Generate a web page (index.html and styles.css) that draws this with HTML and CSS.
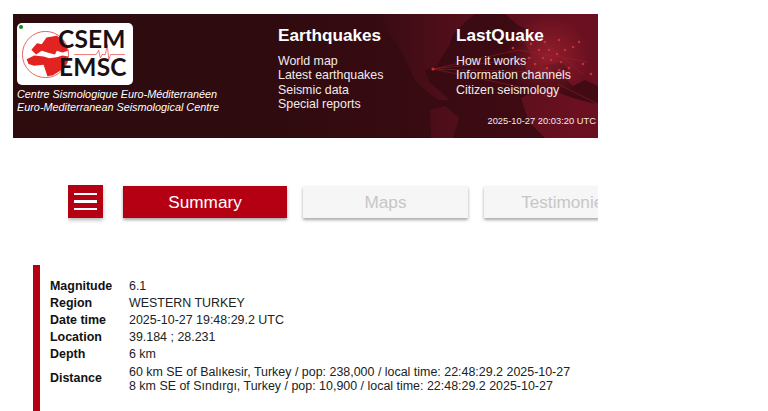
FILE: index.html
```html
<!DOCTYPE html>
<html lang="en">
<head>
<meta charset="utf-8">
<title>CSEM EMSC</title>
<link rel="stylesheet" href="styles.css">
</head>
<body>
<div class="page">
  <header class="header">
    <svg class="map" viewBox="0 0 585 124" preserveAspectRatio="none" aria-hidden="true">
      <defs>
        <linearGradient id="shade" x1="0" x2="1" y1="0" y2="0">
          <stop offset="0" stop-color="#2e0c0e"/>
          <stop offset="0.45" stop-color="#2f0b0f"/>
          <stop offset="0.75" stop-color="#3a0a12"/>
          <stop offset="1" stop-color="#430a14"/>
        </linearGradient>
        <linearGradient id="land" gradientUnits="userSpaceOnUse" x1="350" x2="560" y1="0" y2="0">
          <stop offset="0" stop-color="#340b11"/>
          <stop offset="0.4" stop-color="#4f0e1a"/>
          <stop offset="1" stop-color="#6a1020"/>
        </linearGradient>
        <radialGradient id="glow" gradientUnits="userSpaceOnUse" cx="535" cy="42" r="42">
          <stop offset="0" stop-color="#a02230" stop-opacity="0.75"/>
          <stop offset="1" stop-color="#a02230" stop-opacity="0"/>
        </radialGradient>
      </defs>
      <rect width="585" height="124" fill="url(#shade)"/>
      <path fill="url(#land)" d="M370 0 H462 L452 8 L440 20 L436 32 L428 44 L424 52 L412 56 L416 68 L428 78 L436 86 L426 86 L414 78 L402 66 L394 48 L384 30 L372 14 Z"/>
      <path fill="url(#land)" d="M417 96 L432 92 L446 104 L440 124 H418 Z"/>
      <path fill="url(#land)" d="M492 0 H585 V72 L572 66 L560 72 L548 60 L530 62 L516 66 L512 52 L518 40 L510 26 L524 18 L506 12 Z"/>
      <path fill="url(#land)" d="M508 84 L524 76 L544 78 L560 84 L574 88 L585 90 V124 H532 L516 108 Z"/>
      <path fill="#3a0a12" d="M530 52 L548 48 L556 56 L542 58 Z"/>
      <rect x="490" width="95" height="90" fill="url(#glow)"/>
      <g stroke="#a1232d" stroke-width="0.6" opacity="0.8" fill="none">
        <path d="M420 55 L520 44"/>
        <path d="M420 55 L505 36"/>
        <path d="M420 55 L530 58"/>
        <path d="M420 55 L512 74"/>
        <path d="M530 28 L570 60"/>
        <path d="M505 36 L575 48"/>
        <path d="M545 70 L585 90"/>
      </g>
      <g fill="#c23037">
        <circle cx="420" cy="55" r="1.6"/><circle cx="532" cy="28" r="1.3"/><circle cx="546" cy="26" r="1.3"/>
        <circle cx="518" cy="30" r="1.3"/><circle cx="526" cy="36" r="1.3"/><circle cx="536" cy="36" r="1.3"/>
        <circle cx="544" cy="40" r="1.3"/><circle cx="552" cy="36" r="1.3"/><circle cx="560" cy="33" r="1.3"/>
        <circle cx="516" cy="44" r="1.3"/><circle cx="530" cy="44" r="1.3"/><circle cx="538" cy="46" r="1.3"/>
        <circle cx="548" cy="48" r="1.3"/><circle cx="522" cy="50" r="1.3"/><circle cx="534" cy="54" r="1.3"/>
        <circle cx="546" cy="56" r="1.3"/><circle cx="526" cy="58" r="1.3"/><circle cx="556" cy="54" r="1.3"/>
        <circle cx="570" cy="50" r="1.3"/><circle cx="578" cy="60" r="1.3"/><circle cx="500" cy="34" r="1.3"/>
        <circle cx="566" cy="28" r="1.3"/><circle cx="510" cy="60" r="1.3"/>
      </g>
    </svg>
    <div class="brand">
      <div class="logo">
        <span class="status-dot"></span>
        <svg class="globe" viewBox="0 0 52 52" aria-hidden="true">
          <circle cx="26" cy="26" r="24.5" fill="#fff" stroke="#ea5a5a" stroke-width="1"/>
          <path fill="#e32222" d="M11 21 L17 14 L22 15 L27 8 L38 6 L45 11 L50 22 L44 24 L38 22 L36 26 L28 24 L22 22 L16 26 Z"/>
          <path fill="#e32222" d="M6 31 L14 27 L24 28 L30 30 L38 29 L44 27 L50 28 L49 35 L42 43 L34 48 L28 49 L26 43 L24 37 L14 38 L8 36 Z"/>
        </svg>
        <svg class="trace" viewBox="0 0 60 20" aria-hidden="true">
          <path d="M0 13 H26 L29 8 L31 17 L33 13 H37 L39 1 L41 19 L43 13 H60" fill="none" stroke="#e63a3a" stroke-width="0.8"/>
        </svg>
        <span class="logo-word logo-csem">CSEM</span>
        <span class="logo-word logo-emsc">EMSC</span>
      </div>
      <p class="tagline">Centre Sismologique Euro-Méditerranéen<br>Euro-Mediterranean Seismological Centre</p>
    </div>
    <nav class="menus">
      <div class="menu menu-eq">
        <h2 class="menu-title">Earthquakes</h2>
        <a class="menu-link">World map</a>
        <a class="menu-link">Latest earthquakes</a>
        <a class="menu-link">Seismic data</a>
        <a class="menu-link">Special reports</a>
      </div>
      <div class="menu">
        <h2 class="menu-title">LastQuake</h2>
        <a class="menu-link">How it works</a>
        <a class="menu-link">Information channels</a>
        <a class="menu-link">Citizen seismology</a>
      </div>
    </nav>
    <div class="clock">2025-10-27 20:03:20 UTC</div>
  </header>

  <div class="tabs">
    <button class="burger" aria-label="Menu"><span></span><span></span><span></span></button>
    <button class="tab tab-active">Summary</button>
    <button class="tab tab-wide">Maps</button>
    <button class="tab tab-wide">Testimonies</button>
  </div>

  <section class="summary">
    <table class="facts">
      <tr><th>Magnitude</th><td>6.1</td></tr>
      <tr><th>Region</th><td>WESTERN TURKEY</td></tr>
      <tr><th>Date time</th><td>2025-10-27 19:48:29.2 UTC</td></tr>
      <tr><th>Location</th><td>39.184 ; 28.231</td></tr>
      <tr><th>Depth</th><td>6 km</td></tr>
      <tr><th>Distance</th><td class="distance">60 km SE of Balıkesir, Turkey / pop: 238,000 / local time: 22:48:29.2 2025-10-27<br>8 km SE of Sındırgı, Turkey / pop: 10,900 / local time: 22:48:29.2 2025-10-27</td></tr>
    </table>
  </section>
</div>
</body>
</html>
```
FILE: styles.css
```css
html, body { margin: 0; padding: 0; background: #fff; height: 411px; overflow: hidden; }
body { font-family: "Liberation Sans", Arial, sans-serif; color: #111; }

.page { width: 585px; margin: 14px 0 0 13px; }

.header { position: relative; height: 124px; display: flex; overflow: hidden; color: #fff; }
.map { position: absolute; inset: 0; width: 100%; height: 100%; }

.brand { position: relative; flex: none; width: 265px; padding: 9px 0 0 4px; box-sizing: border-box; }
.logo { position: relative; width: 116px; height: 62px; background: #fff; border-radius: 5px; }
.status-dot { position: absolute; left: 1px; top: 1px; width: 4px; height: 4px; border-radius: 50%; background: #0a8a1e; transform: translate(1px, 1px); }
.globe { position: absolute; left: 4px; top: 7px; width: 49px; height: 49px; }
.trace { position: absolute; left: 57px; top: 19px; width: 51px; height: 20px; }
.logo-word { position: absolute; left: 41px; font-family: Lato, "Open Sans", sans-serif; font-weight: 700; font-size: 24.5px; line-height: 24px; color: #1a1012; letter-spacing: 0.2px; }
.logo-csem { top: 4px; }
.logo-emsc { top: 32px; left: 42px; }
.tagline { margin: 3px 0 0; font-size: 10.85px; line-height: 13px; font-style: italic; color: #fff; white-space: nowrap; }

.menus { position: relative; display: flex; padding-top: 12px; }
.menu { display: flex; flex-direction: column; width: 178px; }
.menu-title { margin: 0 0 9px; font-size: 17.2px; line-height: 19px; font-weight: 700; color: #fff; }
.menu-link { font-size: 12.4px; line-height: 14.4px; color: #f2eaea; }

.clock { position: absolute; right: 2px; bottom: 11px; font-size: 9.35px; line-height: 12px; color: #f2eaea; }

.tabs { display: flex; align-items: flex-start; margin: 47px 0 0 55px; gap: 16px; overflow: hidden; height: 40px; }
.burger { flex: none; width: 35px; height: 33px; margin: 0 4px 0 0; padding: 0 6px; border: 0; background: #b50013; display: flex; flex-direction: column; justify-content: center; gap: 5px; box-shadow: 0 2px 4px rgba(0,0,0,.3); }
.burger span { display: block; height: 2.5px; background: #fff; }
.tab { flex: none; width: 164px; height: 32px; margin: 1px 0 0; padding: 0; border: 0; background: #f6f6f6; color: #c6c6c6; font: 17.2px/32px "Liberation Sans", Arial, sans-serif; box-shadow: 0 2px 3px rgba(0,0,0,.35); }
.tab-active { background: #b50013; color: #fff; }
.tab-wide { width: 165px; }

.summary { margin: 40px 0 0 20px; padding: 12px 0 0 7px; border-left: 7px solid #b50013; height: 160px; box-sizing: border-box; }
.facts { border-collapse: collapse; font-size: 12.45px; }
.facts th { text-align: left; font-weight: 700; width: 79px; padding: 0 0 0 3px; color: #111; }
.facts td { padding: 0; white-space: nowrap; color: #222; }
.facts tr { height: 17px; }
.facts .distance { line-height: 14px; padding-top: 3px; }
```
